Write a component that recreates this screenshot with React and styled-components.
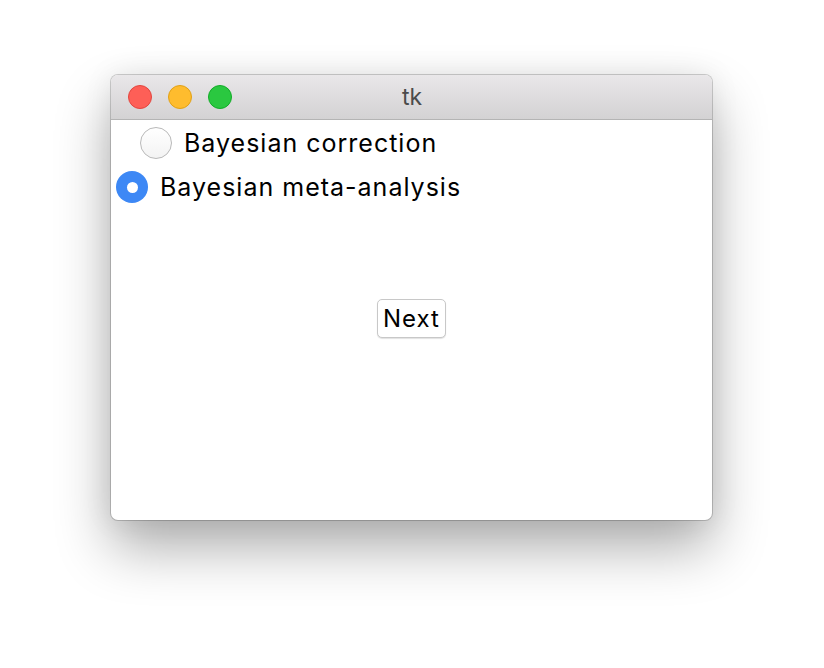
import React, { useState } from "react";
import styled, { createGlobalStyle } from "styled-components";

const GlobalStyle = createGlobalStyle`
  html, body {
    margin: 0;
    padding: 0;
    background: #ffffff;
    font-family: Inter, "Liberation Sans", Arial, sans-serif;
  }
`;

const Page = styled.div`
  width: 824px;
  height: 668px;
  box-sizing: border-box;
  padding: 75px 0 0 111px;
  background: #ffffff;
`;

const Window = styled.div`
  width: 601px;
  height: 445px;
  border-radius: 7px;
  overflow: hidden;
  background: #ffffff;
  box-shadow: 0 0 0 1px rgba(0, 0, 0, 0.18), 0 28px 55px rgba(0, 0, 0, 0.32),
    0 0 30px rgba(0, 0, 0, 0.08);
  display: flex;
  flex-direction: column;
`;

const TitleBar = styled.div`
  position: relative;
  height: 44px;
  flex-shrink: 0;
  background: linear-gradient(#e9e7e9, #d3d2d3);
  border-bottom: 1px solid #b4b4b4;
  display: flex;
  align-items: center;
  justify-content: center;
`;

const Lights = styled.div`
  position: absolute;
  left: 17px;
  top: 10px;
  display: flex;
  gap: 16px;
`;

const Light = styled.span`
  width: 24px;
  height: 24px;
  border-radius: 50%;
  box-sizing: border-box;
  background: ${(p) => p.fill};
  border: 1px solid ${(p) => p.edge};
`;

const Title = styled.span`
  font-size: 23px;
  color: #4b4b4b;
  padding-left: 1px;
`;

const Body = styled.div`
  flex: 1;
  display: flex;
  flex-direction: column;
  padding-top: 1px;
`;

const Option = styled.label`
  display: flex;
  align-items: center;
  gap: 12px;
  height: 44px;
  margin-left: ${(p) => p.indent}px;
  font-size: 25px;
  letter-spacing: 1px;
  color: #000;
  cursor: default;
`;

const Radio = styled.span`
  width: 32px;
  height: 32px;
  border-radius: 50%;
  box-sizing: border-box;
  display: flex;
  align-items: center;
  justify-content: center;
  background: ${(p) => (p.checked ? "#3d88f5" : "linear-gradient(#ffffff, #f3f3f3)")};
  border: ${(p) => (p.checked ? "none" : "1px solid #b9b9b9")};

  &::after {
    content: "";
    width: 11px;
    height: 11px;
    border-radius: 50%;
    background: #ffffff;
    display: ${(p) => (p.checked ? "block" : "none")};
  }
`;

const ButtonRow = styled.div`
  display: flex;
  justify-content: center;
  margin-top: 90px;
`;

const Button = styled.button`
  height: 39px;
  padding: 0 5px;
  font-family: Inter, "Liberation Sans", Arial, sans-serif;
  font-size: 24px;
  letter-spacing: 1px;
  color: #000;
  background: #ffffff;
  border: 1px solid #c8c8c8;
  border-radius: 5px;
  box-shadow: 0 1px 1px rgba(0, 0, 0, 0.12);
`;

const options = [
  { label: "Bayesian correction", indent: 29 },
  { label: "Bayesian meta-analysis", indent: 5 }
];

const App = () => {
  const [choice, setChoice] = useState(1);

  return (
    <Page>
      <GlobalStyle />
      <Window>
        <TitleBar>
          <Lights>
            <Light fill="#fe5f57" edge="#e2463f" />
            <Light fill="#febc2e" edge="#e1a116" />
            <Light fill="#2ac840" edge="#12ac28" />
          </Lights>
          <Title>tk</Title>
        </TitleBar>
        <Body>
          {options.map((o, i) => (
            <Option key={o.label} indent={o.indent} onClick={() => setChoice(i)}>
              <Radio checked={choice === i} />
              {o.label}
            </Option>
          ))}
          <ButtonRow>
            <Button>Next</Button>
          </ButtonRow>
        </Body>
      </Window>
    </Page>
  );
};

export default App;
